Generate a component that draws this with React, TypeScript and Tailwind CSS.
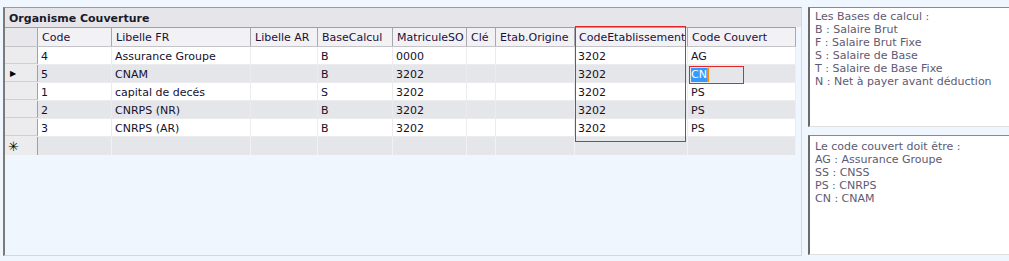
const cols = [
  { key: "code", label: "Code", w: "w-[74px]" },
  { key: "libFr", label: "Libelle FR", w: "w-[139px]" },
  { key: "libAr", label: "Libelle AR", w: "w-[67px]" },
  { key: "base", label: "BaseCalcul", w: "w-[75px]" },
  { key: "mat", label: "MatriculeSO", w: "w-[74px]" },
  { key: "cle", label: "Clé", w: "w-[29px]" },
  { key: "etab", label: "Etab.Origine", w: "w-[79px]" },
  { key: "codeEtab", label: "CodeEtablissement", w: "w-[113px]" },
  { key: "couv", label: "Code Couvert", w: "w-[108px]" },
];

const rows = [
  { code: "4", libFr: "Assurance Groupe", libAr: "", base: "B", mat: "0000", cle: "", etab: "", codeEtab: "3202", couv: "AG" },
  { code: "5", libFr: "CNAM", libAr: "", base: "B", mat: "3202", cle: "", etab: "", codeEtab: "3202", couv: "CN" },
  { code: "1", libFr: "capital de decés", libAr: "", base: "S", mat: "3202", cle: "", etab: "", codeEtab: "3202", couv: "PS" },
  { code: "2", libFr: "CNRPS (NR)", libAr: "", base: "B", mat: "3202", cle: "", etab: "", codeEtab: "3202", couv: "PS" },
  { code: "3", libFr: "CNRPS (AR)", libAr: "", base: "B", mat: "3202", cle: "", etab: "", codeEtab: "3202", couv: "PS" },
];

const bases = [
  "Les Bases de calcul :",
  "B : Salaire Brut",
  "F : Salaire Brut Fixe",
  "S : Salaire de Base",
  "T : Salaire de Base Fixe",
  "N : Net à payer avant déduction",
];

const codes = [
  "Le code couvert doit être :",
  "AG : Assurance Groupe",
  "SS : CNSS",
  "PS : CNRPS",
  "CN : CNAM",
];

export default function App() {
  return (
    <div className="w-[1009px] h-[261px] bg-[#eff6fd] flex pt-[7px] pl-[3px] overflow-hidden text-[11px] leading-[13px] font-['Tahoma','DejaVu_Sans',sans-serif]">
      {/* Grid panel */}
      <div className="relative w-[801px] h-[249px] flex flex-col border-l-2 border-t border-l-[#7a7a7a] border-t-[#9a9a9a] border-r border-b border-r-[#d8d8d8] border-b-[#d8d8d8]">
        <div className="h-[19px] bg-[#e6e6ea] flex items-center pl-[4px] pt-[1px] font-bold text-[#1a1a2a] shrink-0">
          Organisme Couverture
        </div>
        <div className="flex-1 bg-[#eff6fd] pr-[5px]">
          {/* header */}
          <div className="flex h-[20px] bg-[#f2f2f4] border-t border-t-[#a0a0a0] border-b border-b-[#c4c4c8]">
            <div className="w-[33px] shrink-0 bg-[#e8e8ec] border-r border-r-[#a8a8a8]" />
            {cols.map((c) => (
              <div key={c.key} className={`${c.w} shrink-0 flex items-center pl-[4px] text-[#1a1040] border-r border-r-[#a8a8ac] whitespace-nowrap overflow-hidden`}>
                {c.label}
              </div>
            ))}
          </div>
          {/* rows */}
          {rows.map((r, i) => (
            <div key={i} className={`flex h-[18px] border-b border-b-[#ececee] ${i % 2 === 1 ? "bg-[#e5e6ea]" : "bg-white"}`}>
              <div className="w-[33px] shrink-0 bg-[#ececee] border-r border-r-[#a0a0a0] border-b border-b-[#d0d0d0] flex items-center pl-[5px] text-black text-[8px]">
                {i === 1 ? "▶" : ""}
              </div>
              {cols.map((c) => (
                <div key={c.key} className={`${c.w} shrink-0 flex items-center pl-[3px] pt-[2px] text-[#14102e] border-r border-r-[#ececee] whitespace-nowrap overflow-hidden`}>
                  {i === 1 && c.key === "couv" ? (
                    <span className="bg-[#3399ff] text-white leading-[14px] border-r-2 border-r-[#ff8a00]">CN</span>
                  ) : (
                    (r as Record<string, string>)[c.key]
                  )}
                </div>
              ))}
            </div>
          ))}
          <div className="flex h-[18px] bg-[#e5e6ea]">
            <div className="w-[33px] shrink-0 bg-[#ececee] border-r border-r-[#a0a0a0] flex items-center pl-[3px] text-black text-[13px]">
              ✳
            </div>
            {cols.map((c) => (
              <div key={c.key} className={`${c.w} shrink-0 border-r border-r-[#f2f2f4]`} />
            ))}
          </div>
        </div>
        {/* highlight boxes */}
        <div className="absolute left-[570px] top-[18px] w-[111px] h-[116px] border border-[#e0282a]" />
        <div className="absolute left-[684px] top-[58px] w-[55px] h-[18px] border border-[#e0282a]" />
      </div>
      {/* Right notes */}
      <div className="ml-[6px] flex flex-col gap-[8px]">
        <div className="w-[210px] h-[120px] bg-white border-l-2 border-t border-l-[#6a6a6a] border-t-[#8a8a8a] border-b border-b-[#e0e0e0] pl-[5px] pt-[2px] text-[#5e5a74] leading-[13px]">
          {bases.map((t) => (
            <div key={t}>{t}</div>
          ))}
        </div>
        <div className="w-[210px] h-[120px] bg-white border-l-2 border-t border-l-[#6a6a6a] border-t-[#8a8a8a] border-b border-b-[#e0e0e0] pl-[5px] pt-[4px] text-[#5e5a74] leading-[13px]">
          {codes.map((t) => (
            <div key={t}>{t}</div>
          ))}
        </div>
      </div>
    </div>
  );
}
